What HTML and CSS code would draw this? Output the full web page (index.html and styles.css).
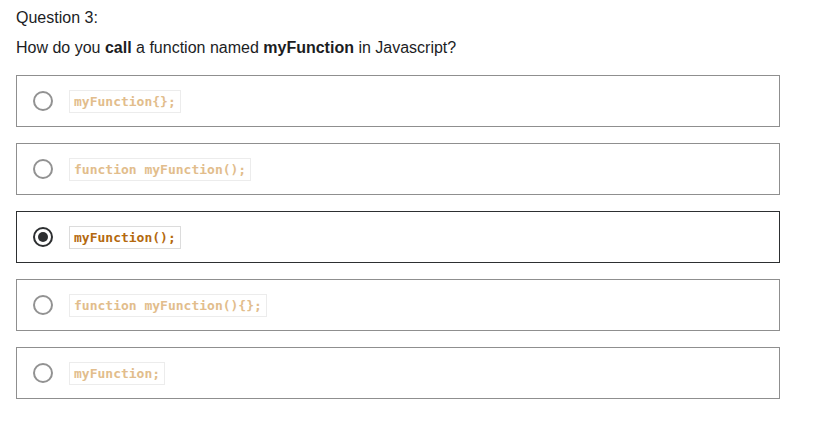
FILE: index.html
```html
<!DOCTYPE html>
<html>
<head>
<meta charset="utf-8">
<link rel="stylesheet" href="styles.css">
</head>
<body>
<div class="quiz">
  <div class="qnum">Question 3:</div>
  <div class="prompt">How do you <strong>call</strong> a function named <strong>myFunction</strong> in Javascript?</div>
  <ul class="answers">
    <li class="answer"><span class="radio"></span><code>myFunction{};</code></li>
    <li class="answer"><span class="radio"></span><code>function myFunction();</code></li>
    <li class="answer selected"><span class="radio"></span><code>myFunction();</code></li>
    <li class="answer"><span class="radio"></span><code>function myFunction(){};</code></li>
    <li class="answer"><span class="radio"></span><code>myFunction;</code></li>
  </ul>
</div>
</body>
</html>
```
FILE: styles.css
```css
html, body { margin: 0; padding: 0; background: #fff; }
body { font-family: "Liberation Sans", Arial, sans-serif; color: #1c1d1f; }
.quiz { padding: 9px 40px 0 16px; width: 764px; }
.qnum { font-size: 16px; line-height: 18px; }
.prompt { font-size: 16px; line-height: 18px; margin-top: 12px; }
.prompt strong { font-weight: 700; }
.answers { list-style: none; margin: 18px 0 0; padding: 0; display: flex; flex-direction: column; gap: 16px; }
.answer { height: 50px; border: 1px solid #8f8f8f; display: flex; align-items: center; padding-left: 16px; }
.radio { width: 16px; height: 16px; border: 2px solid #929292; border-radius: 50%; box-sizing: content-box; margin-right: 16px; display: flex; align-items: center; justify-content: center; }
code { font-family: "DejaVu Sans Mono", monospace; font-weight: 700; font-size: 13px; line-height: 21px; padding: 0 4px; border: 1px solid #ececec; color: #e2bd8c; }
.selected { border-color: #2d2f31; }
.selected .radio { border-color: #2d2f31; }
.selected .radio::after { content: ""; width: 10px; height: 10px; border-radius: 50%; background: #2d2f31; }
.selected code { color: #b4690e; border-color: #dcdcdc; }
```
